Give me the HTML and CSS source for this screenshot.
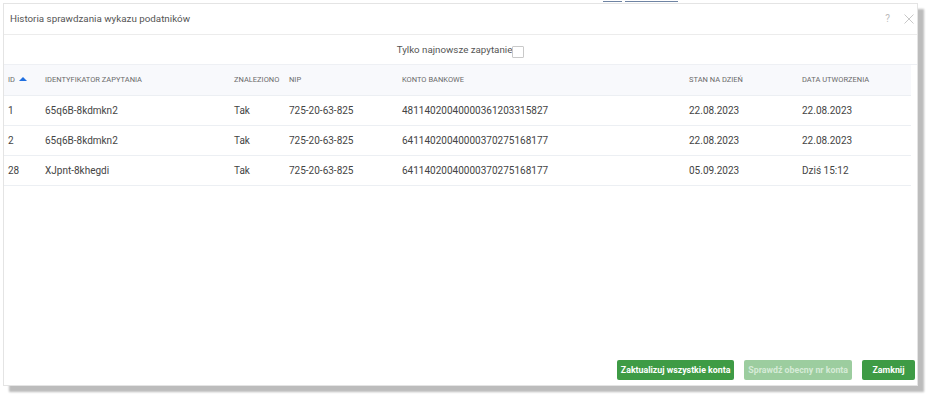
FILE: index.html
```html
<html lang="pl">

<head>
  <meta charset="UTF-8">
  <title>Historia sprawdzania wykazu podatników</title>
  <link rel="stylesheet" href="styles.css">
</head>

<body>
  <div class="backdrop-bar"><span class="seg-a"></span><span class="seg-b"></span></div>
  <div class="dialog">
    <div class="dialog-head">
      <span class="dialog-title">Historia sprawdzania wykazu podatników</span>
      <span class="dialog-tools">
        <span class="help">?</span>
        <svg class="close" width="10" height="10" viewBox="0 0 10 10">
          <path d="M0.5 0.5 L9.5 9.5 M9.5 0.5 L0.5 9.5" stroke="#c8c8c8" stroke-width="1" fill="none" />
        </svg>
      </span>
    </div>
    <div class="filter">
      <label>Tylko najnowsze zapytanie<span class="checkbox"></span></label>
    </div>
    <table class="grid">
      <colgroup>
        <col style="width: 37px">
        <col style="width: 189px">
        <col style="width: 55px">
        <col style="width: 113px">
        <col style="width: 287px">
        <col style="width: 113px">
        <col>
      </colgroup>
      <thead>
        <tr>
          <th>ID <span class="sort-up"></span></th>
          <th>Identyfikator zapytania</th>
          <th>Znaleziono</th>
          <th>NIP</th>
          <th>Konto bankowe</th>
          <th>Stan na dzień</th>
          <th>Data utworzenia</th>
        </tr>
      </thead>
      <tbody>
        <tr>
          <td>1</td>
          <td>65q6B-8kdmkn2</td>
          <td>Tak</td>
          <td>725-20-63-825</td>
          <td>48114020040000361203315827</td>
          <td>22.08.2023</td>
          <td>22.08.2023</td>
        </tr>
        <tr>
          <td>2</td>
          <td>65q6B-8kdmkn2</td>
          <td>Tak</td>
          <td>725-20-63-825</td>
          <td>64114020040000370275168177</td>
          <td>22.08.2023</td>
          <td>22.08.2023</td>
        </tr>
        <tr>
          <td>28</td>
          <td>XJpnt-8khegdi</td>
          <td>Tak</td>
          <td>725-20-63-825</td>
          <td>64114020040000370275168177</td>
          <td>05.09.2023</td>
          <td>Dziś 15:12</td>
        </tr>
      </tbody>
    </table>
    <div class="dialog-foot">
      <button class="btn">Zaktualizuj wszystkie konta</button>
      <button class="btn" disabled>Sprawdź obecny nr konta</button>
      <button class="btn btn-close">Zamknij</button>
    </div>
  </div>
</body>

</html>
```

FILE: styles.css
```css
body {
  margin: 0;
  background: #fff;
  font-family: Roboto, "Liberation Sans", sans-serif;
  color: #444;
}

.backdrop-bar {
  height: 3px;
  display: flex;
  align-items: flex-start;
  padding-left: 603px;
}

.backdrop-bar span {
  display: block;
  height: 1px;
  margin-top: 1px;
  background: #6f84a3;
}

.backdrop-bar .seg-a {
  width: 19px;
  margin-right: 3px;
}

.backdrop-bar .seg-b {
  width: 53px;
}

.dialog {
  margin-left: 3px;
  width: 913px;
  height: 381px;
  border: 1px solid #e4e4e4;
  background: #fff;
  box-shadow: 6px 6px 2px #bcbcbc;
  display: flex;
  flex-direction: column;
}

.dialog-head {
  height: 30px;
  border-bottom: 1px solid #ececec;
  display: flex;
  align-items: center;
  justify-content: space-between;
  padding: 0 3px 1px 6px;
  box-sizing: border-box;
  height: 31px;
}

.dialog-title {
  font-size: 9.8px;
  color: #555;
}

.dialog-tools {
  display: flex;
  align-items: center;
  gap: 14px;
}

.help {
  font-size: 10px;
  color: #bbb;
}

.filter {
  height: 29px;
  border-bottom: 1px solid #eef0f4;
  display: flex;
  align-items: center;
  justify-content: center;
  font-size: 9.75px;
  color: #555;
}

.filter label {
  display: flex;
  align-items: center;
}

.checkbox {
  display: inline-block;
  width: 10px;
  height: 10px;
  border: 1px solid #c9c9c9;
  border-radius: 1px;
  margin-top: 5px;
}

.grid {
  width: 907px;
  border-collapse: collapse;
  table-layout: fixed;
}

.grid th {
  height: 30px;
  background: #f8f9fc;
  border-bottom: 1px solid #eceff3;
  text-align: left;
  font-weight: normal;
  font-size: 7.5px;
  text-transform: uppercase;
  color: #6a6a6a;
  padding: 0 0 0 4px;
  white-space: nowrap;
}

.grid td {
  height: 30px;
  border-bottom: 1px solid #eceff3;
  font-size: 10px;
  color: #444;
  padding: 0 0 0 4px;
  white-space: nowrap;
}

.sort-up {
  display: inline-block;
  width: 0;
  height: 0;
  border-left: 4px solid transparent;
  border-right: 4px solid transparent;
  border-bottom: 4px solid #1f6fe0;
  margin-left: 2px;
  vertical-align: 1px;
}

.dialog-foot {
  margin-top: auto;
  display: flex;
  justify-content: flex-end;
  gap: 10px;
  padding: 0 2px 5px 0;
}

.btn {
  height: 20px;
  padding: 0 4px;
  border: none;
  border-radius: 2px;
  background: #3e9b45;
  color: #fff;
  font-family: Roboto, "Liberation Sans", sans-serif;
  font-weight: bold;
  font-size: 8.8px;
}

.btn:disabled {
  background: #9ccd9f;
  color: #d6ebd7;
}

.btn-close {
  width: 53px;
}
```
